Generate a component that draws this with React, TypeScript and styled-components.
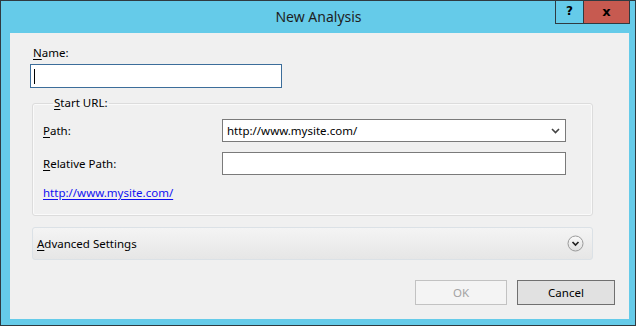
import React from "react";
import styled, { createGlobalStyle } from "styled-components";

const Global = createGlobalStyle`
  html, body { margin: 0; padding: 0; background: #ffffff; }
  body { font-family: "Noto Sans", "Open Sans", sans-serif; font-size: 11.5px; color: #000; }
`;

const Window = styled.div`
  box-sizing: border-box;
  width: 636px;
  height: 326px;
  border: 1px solid #2f3a40;
  background: #65cbe9;
  display: flex;
  flex-direction: column;
`;

const TitleBar = styled.div`
  height: 32px;
  display: grid;
  grid-template-columns: 1fr auto 1fr;
  align-items: start;
`;

const Title = styled.div`
  grid-column: 2;
  font-size: 14px;
  line-height: 32px;
  color: #1e1e1e;
  padding-left: 1px;
`;

const Controls = styled.div`
  grid-column: 3;
  justify-self: end;
  display: flex;
  margin-top: -1px;
  margin-right: 5px;
`;

const CtrlButton = styled.div<{ $close?: boolean }>`
  box-sizing: border-box;
  height: 24px;
  width: ${(p) => (p.$close ? 46 : 29)}px;
  border: 1px solid #2f3a40;
  border-left-width: ${(p) => (p.$close ? 0 : 1)}px;
  background: ${(p) => (p.$close ? "#c75a50" : "#65cbe9")};
  display: flex;
  align-items: center;
  justify-content: center;
  font-family: "DejaVu Sans", sans-serif;
  font-weight: bold;
  font-size: ${(p) => (p.$close ? 13 : 12)}px;
  color: #000;
  padding-bottom: 2px;
`;

const Content = styled.div`
  flex: 1;
  margin: 0 6px 6px 9px;
  background: #f0f0f0;
  display: flex;
  flex-direction: column;
  padding: 0 36px 14px 22px;
`;

const FieldLabel = styled.div<{ $indent?: number }>`
  line-height: 16px;
  padding-left: ${(p) => p.$indent ?? 0}px;
`;

const Acc = styled.span`
  text-decoration: underline;
  text-underline-offset: 2px;
`;

const NameBlock = styled.div`
  display: flex;
  flex-direction: column;
  gap: 3px;
  margin-top: 12px;
  margin-left: -2px;
`;

const TextBox = styled.div<{ $focused?: boolean; $width?: number }>`
  box-sizing: border-box;
  width: ${(p) => (p.$width ? `${p.$width}px` : "100%")};
  height: ${(p) => (p.$focused ? 24 : 23)}px;
  background: #fff;
  border: 1px solid ${(p) => (p.$focused ? "#3c6d9a" : "#7a7a7a")};
  display: flex;
  align-items: center;
  padding: 0 4px;
  gap: 4px;
`;

const Caret = styled.div`
  width: 1px;
  height: 15px;
  background: #000;
  margin-left: -1px;
`;

const Group = styled.fieldset`
  box-sizing: border-box;
  margin: 8px 0 0 0;
  height: 120px;
  border: 1px solid #dcdcdc;
  border-radius: 3px;
  box-shadow: inset 0 0 0 1px #fafafa;
  padding: 9px 26px 0 10px;
  display: flex;
  flex-direction: column;
  min-width: 0;
`;

const Legend = styled.legend`
  padding: 0 1px;
  margin-left: 10px;
  line-height: 14px;
`;

const FormRow = styled.div`
  display: grid;
  grid-template-columns: 179px 1fr;
  align-items: center;
  margin-bottom: 10px;
`;

const ValueText = styled.span`
  flex: 1;
  white-space: nowrap;
`;

const Chevron = styled.svg`
  flex: none;
  margin-right: 1px;
`;

const LinkText = styled.a`
  color: #1010f0;
  text-decoration: underline;
  text-underline-offset: 2px;
  line-height: 16px;
  align-self: flex-start;
  cursor: pointer;
`;

const Expander = styled.div`
  box-sizing: border-box;
  margin-top: 11px;
  height: 33px;
  border: 1px solid #dbe1e6;
  border-radius: 3px;
  background: linear-gradient(#f4f4f4, #e6e6e6);
  display: flex;
  align-items: center;
  justify-content: space-between;
  padding: 0 8px 0 4px;
`;

const ExpandIcon = styled.svg`
  flex: none;
`;

const ButtonRow = styled.div`
  margin-top: auto;
  margin-right: -22px;
  display: flex;
  justify-content: flex-end;
  gap: 10px;
`;

const Button = styled.button<{ $width: number; $disabled?: boolean }>`
  box-sizing: border-box;
  width: ${(p) => p.$width}px;
  height: 25px;
  font-family: inherit;
  font-size: 11.5px;
  border: 1px solid ${(p) => (p.$disabled ? "#c2c2c2" : "#707070")};
  background: ${(p) => (p.$disabled ? "#f4f4f4" : "#e1e1e1")};
  color: ${(p) => (p.$disabled ? "#a3a3a3" : "#000")};
  padding: 0 0 1px 0;
  margin: 0;
`;

export default function App() {
  return (
    <>
      <Global />
      <Window>
        <TitleBar>
          <Title>New Analysis</Title>
          <Controls>
            <CtrlButton>?</CtrlButton>
            <CtrlButton $close>x</CtrlButton>
          </Controls>
        </TitleBar>
        <Content>
          <NameBlock>
            <FieldLabel $indent={3}>
              <Acc>N</Acc>ame:
            </FieldLabel>
            <TextBox $focused $width={252}>
              <Caret />
            </TextBox>
          </NameBlock>
          <Group>
            <Legend>
              <Acc>S</Acc>tart URL:
            </Legend>
            <FormRow>
              <FieldLabel>
                <Acc>P</Acc>ath:
              </FieldLabel>
              <TextBox>
                <ValueText>http://www.mysite.com/</ValueText>
                <Chevron width="9" height="6" viewBox="0 0 9 6">
                  <path d="M1 1 L4.5 4.5 L8 1" fill="none" stroke="#444" strokeWidth="1.6" />
                </Chevron>
              </TextBox>
            </FormRow>
            <FormRow>
              <FieldLabel>
                <Acc>R</Acc>elative Path:
              </FieldLabel>
              <TextBox />
            </FormRow>
            <LinkText>http://www.mysite.com/</LinkText>
          </Group>
          <Expander>
            <span>
              <Acc>A</Acc>dvanced Settings
            </span>
            <ExpandIcon width="17" height="17" viewBox="0 0 17 17">
              <defs>
                <linearGradient id="eg" x1="0" y1="0" x2="0" y2="1">
                  <stop offset="0" stopColor="#fbfbfb" />
                  <stop offset="1" stopColor="#dedede" />
                </linearGradient>
              </defs>
              <circle cx="8.5" cy="8.5" r="7.5" fill="url(#eg)" stroke="#9a9a9a" strokeWidth="1" />
              <path d="M5.5 7 L8.5 10 L11.5 7" fill="none" stroke="#222" strokeWidth="1.7" />
            </ExpandIcon>
          </Expander>
          <ButtonRow>
            <Button $width={92} $disabled disabled>
              OK
            </Button>
            <Button $width={98}>Cancel</Button>
          </ButtonRow>
        </Content>
      </Window>
    </>
  );
}
